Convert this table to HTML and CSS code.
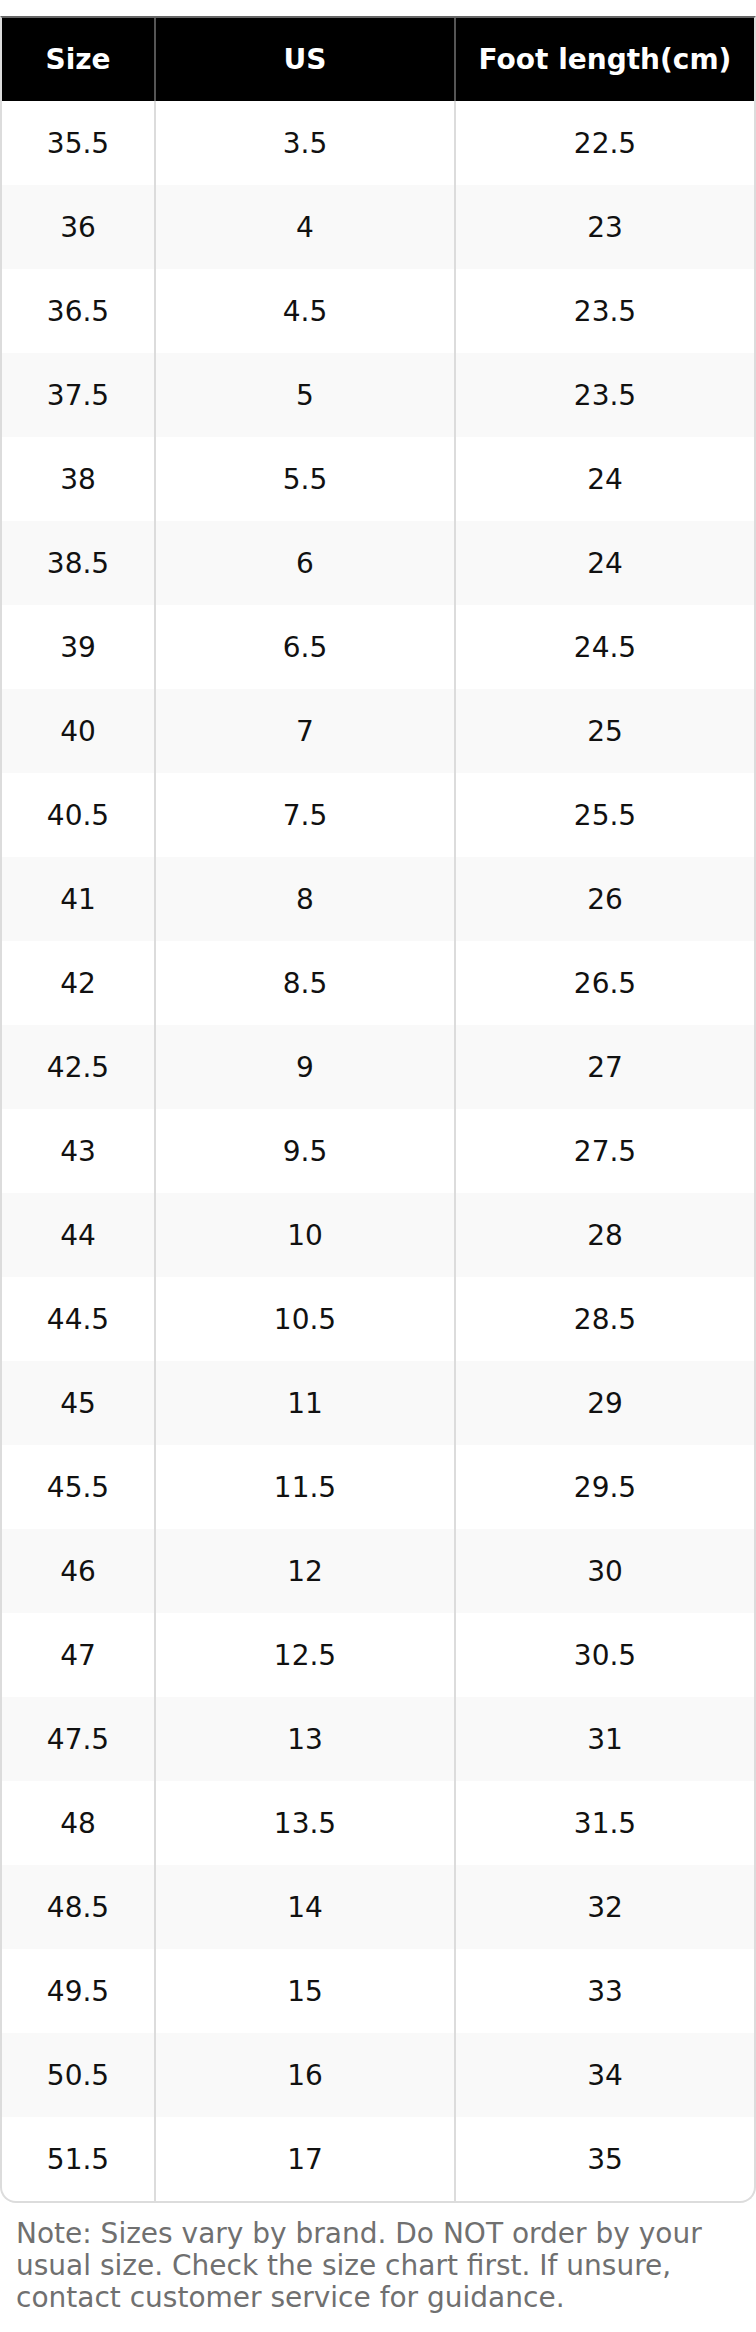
FILE: index.html
```html
<!DOCTYPE html>
<html lang="en">
<head>
<meta charset="utf-8">
<title>Size chart</title>
<link rel="stylesheet" href="styles.css">
</head>
<body>
<div class="page">
  <div class="chart">
    <div class="row head">
      <div class="cell">Size</div>
      <div class="cell">US</div>
      <div class="cell">Foot length(cm)</div>
    </div>
    <div class="row"><div class="cell">35.5</div><div class="cell">3.5</div><div class="cell">22.5</div></div>
    <div class="row"><div class="cell">36</div><div class="cell">4</div><div class="cell">23</div></div>
    <div class="row"><div class="cell">36.5</div><div class="cell">4.5</div><div class="cell">23.5</div></div>
    <div class="row"><div class="cell">37.5</div><div class="cell">5</div><div class="cell">23.5</div></div>
    <div class="row"><div class="cell">38</div><div class="cell">5.5</div><div class="cell">24</div></div>
    <div class="row"><div class="cell">38.5</div><div class="cell">6</div><div class="cell">24</div></div>
    <div class="row"><div class="cell">39</div><div class="cell">6.5</div><div class="cell">24.5</div></div>
    <div class="row"><div class="cell">40</div><div class="cell">7</div><div class="cell">25</div></div>
    <div class="row"><div class="cell">40.5</div><div class="cell">7.5</div><div class="cell">25.5</div></div>
    <div class="row"><div class="cell">41</div><div class="cell">8</div><div class="cell">26</div></div>
    <div class="row"><div class="cell">42</div><div class="cell">8.5</div><div class="cell">26.5</div></div>
    <div class="row"><div class="cell">42.5</div><div class="cell">9</div><div class="cell">27</div></div>
    <div class="row"><div class="cell">43</div><div class="cell">9.5</div><div class="cell">27.5</div></div>
    <div class="row"><div class="cell">44</div><div class="cell">10</div><div class="cell">28</div></div>
    <div class="row"><div class="cell">44.5</div><div class="cell">10.5</div><div class="cell">28.5</div></div>
    <div class="row"><div class="cell">45</div><div class="cell">11</div><div class="cell">29</div></div>
    <div class="row"><div class="cell">45.5</div><div class="cell">11.5</div><div class="cell">29.5</div></div>
    <div class="row"><div class="cell">46</div><div class="cell">12</div><div class="cell">30</div></div>
    <div class="row"><div class="cell">47</div><div class="cell">12.5</div><div class="cell">30.5</div></div>
    <div class="row"><div class="cell">47.5</div><div class="cell">13</div><div class="cell">31</div></div>
    <div class="row"><div class="cell">48</div><div class="cell">13.5</div><div class="cell">31.5</div></div>
    <div class="row"><div class="cell">48.5</div><div class="cell">14</div><div class="cell">32</div></div>
    <div class="row"><div class="cell">49.5</div><div class="cell">15</div><div class="cell">33</div></div>
    <div class="row"><div class="cell">50.5</div><div class="cell">16</div><div class="cell">34</div></div>
    <div class="row"><div class="cell">51.5</div><div class="cell">17</div><div class="cell">35</div></div>
  </div>
  <p class="note">Note: Sizes vary by brand. Do NOT order by your usual size. Check the size chart first. If unsure, contact customer service for guidance.</p>
</div>
</body>
</html>
```
FILE: styles.css
```css
* { box-sizing: border-box; }
html, body { margin: 0; padding: 0; background: #fff; }
body {
  font-family: "DejaVu Sans", sans-serif;
  color: #111;
}
.page { padding-top: 16px; width: 756px; }
.chart {
  border: 2px solid #dcdcdc;
  border-top-color: #666;
  border-radius: 0 0 16px 16px;
  overflow: hidden;
}
.row {
  display: grid;
  grid-template-columns: 152px 300px 300px;
  height: 84px;
  font-size: 28px;
}
.row:nth-child(odd) { background: #f9f9f9; }
.row.head {
  height: 83px;
  background: #000;
  color: #fff;
  font-weight: bold;
}
.cell {
  display: flex;
  align-items: center;
  justify-content: center;
  line-height: 1;
  padding-top: 1px;
}
.head .cell { padding-top: 0; }
.cell + .cell { border-left: 2px solid #dcdcdc; }
.head .cell + .cell { border-left-color: #555; }
.note {
  margin: 0;
  padding: 15px 16px 0;
  font-size: 28px;
  line-height: 32px;
  color: #707070;
}
```
